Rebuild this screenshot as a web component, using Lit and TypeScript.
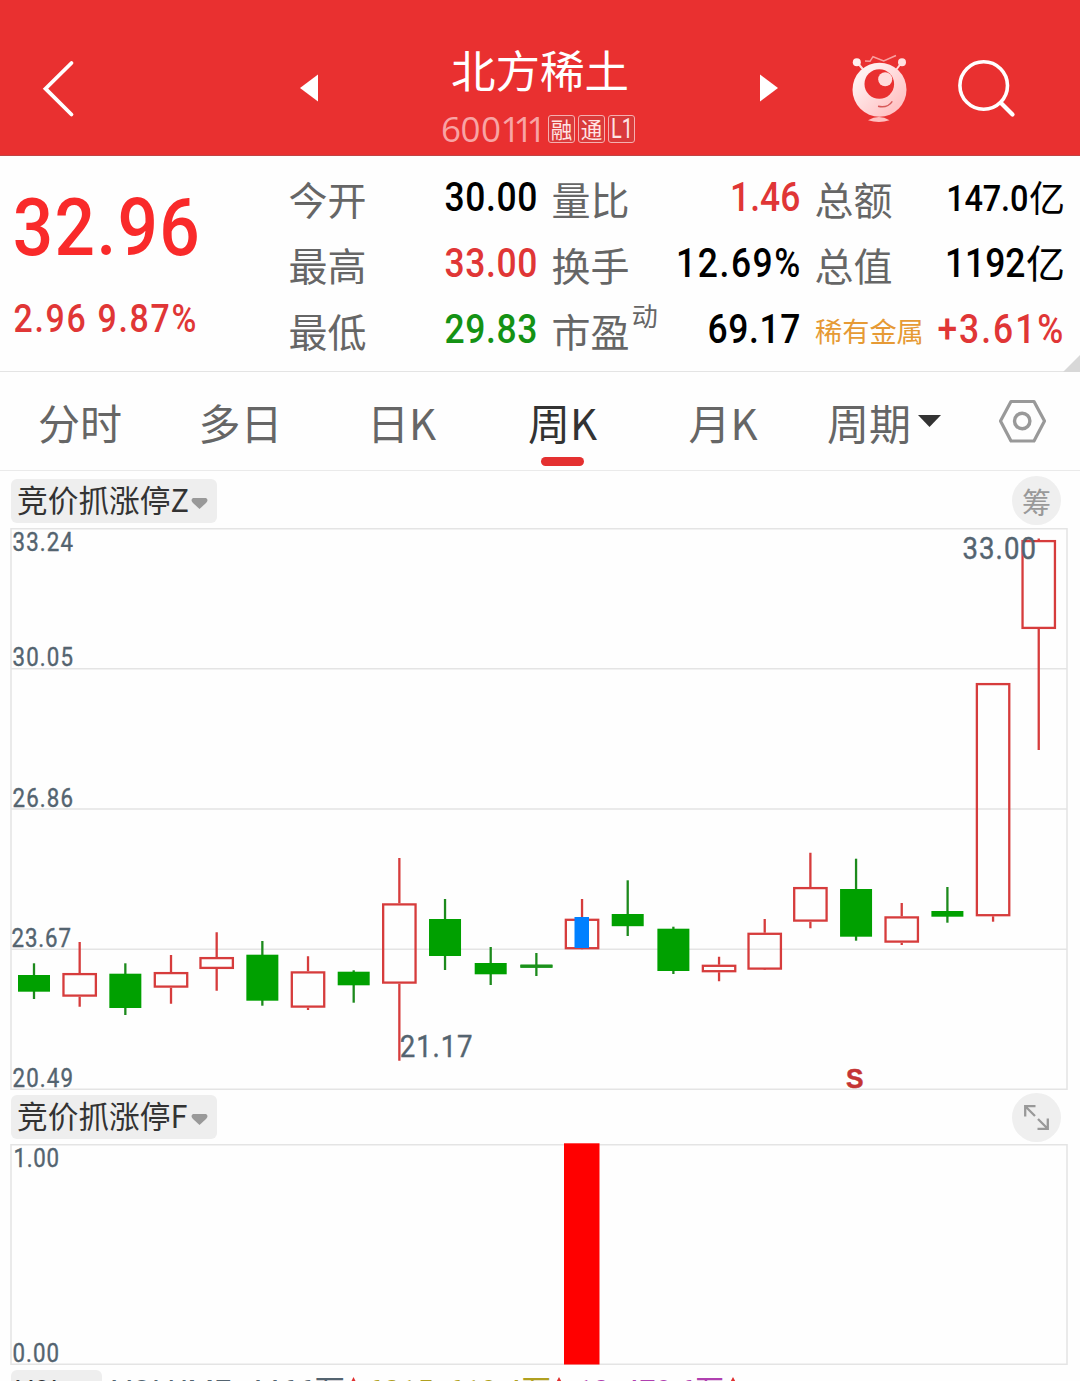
import { LitElement, html, svg, css } from "lit";
import { customElement } from "lit/decorators.js";

type Candle = [up: boolean, top: number, bottom: number, high: number, low: number];

const CANDLES: Candle[] = [
  [false, 975, 991.7, 963.3, 999],
  [true, 973, 996.7, 942, 1006.7],
  [false, 973.7, 1008, 963.3, 1015],
  [true, 972, 987.7, 955, 1003.7],
  [true, 957, 969, 932.3, 990.7],
  [false, 954.7, 1000.7, 941, 1005.7],
  [true, 971.3, 1007.7, 956.3, 1010],
  [false, 971.7, 985.3, 970.3, 1002.7],
  [true, 903.3, 983.7, 858, 1060.7],
  [false, 919, 956, 899, 970],
  [false, 963, 974.3, 947, 985],
  [false, 964.7, 967.7, 953, 976],
  [true, 918.7, 949.3, 899, 949],
  [false, 914, 926.2, 880.3, 936],
  [false, 928.7, 971, 926.7, 974],
  [true, 964.7, 972.3, 956.7, 981.3],
  [true, 932.7, 969.7, 919, 969],
  [true, 887, 921.7, 852.7, 928.3],
  [false, 889, 936.7, 858.7, 940.7],
  [true, 916.3, 942.7, 903, 945],
  [false, 911, 916.7, 887, 922.7],
  [true, 683, 916.3, 683, 921.7],
  [true, 540, 629, 538.5, 750],
];

/** Horizontal squeeze that gives the figures their condensed, openly spaced look. */
const SQUEEZE = 0.89;

/** A figure fitted to a given ink width; `lead` is the left bearing of its first glyph in em. */
const figure = (text: string, width: number, size: number, color: string, baseline: number, height: number, lead = 0.015) => html`
  <svg class="fig" width=${width} height=${height}>
    <text transform="scale(${SQUEEZE} 1)" x=${(-lead * size) / SQUEEZE} y=${baseline} font-size=${size} fill=${color}
      textLength=${(width + (lead - 0.015) * size) / SQUEEZE} lengthAdjust="spacing">${text}</text>
  </svg>`;

const label = (text: string, x: number, y: number, width: number, size: number) => svg`
  <text class="axis" transform="scale(${SQUEEZE} 1)" x=${(x - 0.02 * size) / SQUEEZE} y=${y} font-size=${size}
    textLength=${(width + 0.02 * size) / SQUEEZE} lengthAdjust="spacing">${text}</text>`;

const candle = ([up, top, bottom, high, low]: Candle, i: number) => {
  const cx = 34 + i * 45.67;
  return up
    ? svg`<path class="up" d="M${cx} ${high}V${top}M${cx} ${bottom}V${low}"/>
        <rect class="up" x=${cx - 16.2} y=${top + 1.1} width="32.4" height=${bottom - top - 2.2}/>`
    : svg`<path class="down" d="M${cx} ${high}V${low}"/>
        <rect class="fill" x=${cx - 16} y=${top} width="32" height=${bottom - top}/>`;
};

@customElement("app-root")
export class AppRoot extends LitElement {
  static styles = css`
    :host { display: block; width: 1080px; height: 1381px; overflow: hidden; background: #fefefe; font-family: "Noto Sans CJK SC", sans-serif; color: #666; }
    svg { display: block; overflow: visible; flex: none; }
    .fig text, .axis { font-family: Roboto, sans-serif; font-weight: 500; }
    .axis { fill: #546470; font-weight: 400; stroke: #546470; stroke-width: 0.4; }
    header { box-sizing: border-box; height: 156px; background: #e93030; border-bottom: 1px solid #c04444; display: grid; grid-template-columns: 299px 19px 442px 18px 74px 56px 50px 57px; }
    .mid { display: flex; flex-direction: column; align-items: center; }
    .name { margin: 43px 0 0 2px; height: 51px; line-height: 51px; font-size: 44.5px; color: #fff; }
    .sub { display: flex; align-items: center; margin-top: 21px; width: 194px; gap: 3px; }
    .code { width: 103px; }
    .badge { box-sizing: border-box; width: 27px; height: 28px; border: 1px solid #f5b0b0; border-radius: 3px; background: #d93a3a; color: #ffe4e4; font-size: 21.5px; line-height: 25px; display: flex; justify-content: center; white-space: nowrap; flex: none; }
    .quote { box-sizing: border-box; height: 216px; border-bottom: 1px solid #e4e4e4; display: grid; grid-template-columns: 275px 775px; column-gap: 14px; position: relative; }
    .price { padding: 8px 0 0 14px; }
    .grid { display: grid; grid-template-columns: repeat(3, 249px); grid-auto-rows: 66px; column-gap: 14px; padding-top: 8px; }
    .cell { display: flex; justify-content: space-between; }
    .lab { font-size: 39px; line-height: 66px; height: 66px; margin-top: 1px; margin-left: -0.4px; white-space: nowrap; display: flex; }
    .sup { font-size: 26px; line-height: 36px; margin-left: 2px; }
    .sector { font-size: 27.2px; color: #e69a35; margin-left: 0; }
    .val { display: flex; }
    .yi { color: #000; line-height: 66px; height: 66px; white-space: nowrap; }
    .yi1 { font-size: 36px; margin-top: -1px; margin-right: -1px; }
    .yi2 { font-size: 39px; margin-top: -2px; margin-right: -1px; }
    .corner { position: absolute; right: 0; bottom: -1px; }
    nav { box-sizing: border-box; height: 99px; border-bottom: 1px solid #eaeaea; display: grid; grid-template-columns: 160px 161px 161px 161px 160px 162px 115px; font-size: 42px; }
    .tab { display: flex; flex-direction: column; align-items: center; line-height: 62px; padding-top: 19px; white-space: nowrap; }
    .on { color: #333; }
    .on::after { content: ""; width: 43px; height: 9px; border-radius: 5px; background: #e43030; margin-top: 4px; }
    .more { flex-direction: row; align-items: flex-start; gap: 7px; padding-left: 24px; }
    .tri { margin-top: 2px; }
    .bar { box-sizing: border-box; display: flex; justify-content: space-between; align-items: center; padding: 0 19px 0 11px; }
    .b1 { height: 57px; padding-top: 2px; }
    .b2 { height: 54px; }
    .chip { box-sizing: border-box; width: 206px; height: 44px; border-radius: 6px; background: #eee; color: #333; display: grid; grid-template-columns: 174px 17px; align-items: center; font-size: 30.7px; line-height: 40px; padding: 0 0 5px 6px; white-space: nowrap; }
    .chip svg { margin-top: 9px; }
    .round { width: 49px; height: 49px; border-radius: 50%; background: #efefef; color: #999; display: grid; place-items: center; font-size: 29px; line-height: 40px; }
    .up { fill: none; stroke: #d63c3c; stroke-width: 2.3; }
    .down { stroke: #1c8a1c; stroke-width: 2.3; }
    .fill { fill: #00a000; }
    .line { fill: none; stroke: #e4e4e4; stroke-width: 1.5; }
    .sell { font: bold 27px "Liberation Sans", sans-serif; fill: #c43434; stroke: #c43434; stroke-width: 0.5; }
    .foot { height: 11px; margin-top: 4px; padding-left: 11px; display: flex; gap: 10px; overflow: hidden; }
    .vol { width: 91px; height: 11px; border-radius: 6px 6px 0 0; background: #eee; }
    .foot text { font-family: Roboto, "Noto Sans CJK SC", sans-serif; font-size: 29px; }
  `;

  private header() {
    return html`<header>
      <svg width="299" height="155"><path d="M71.5 63L45.5 88.7L71.5 114.5" fill="none" stroke="#fff" stroke-width="3.8" stroke-linecap="round"/></svg>
      <svg width="19" height="155"><path d="M1 88L19 74.5V101.5Z" fill="#fff"/></svg>
      <div class="mid">
        <div class="name">北方稀土</div>
        <div class="sub">
          <svg class="code" width="103" height="28"><text x="-1 18.5 39 58.5 71.5 84.5" y="26.5" font-family="Open Sans, sans-serif" font-size="35" fill="#f8a4a4">600111</text></svg>
          <span class="badge">融</span><span class="badge">通</span><span class="badge"><svg width="22" height="26"><text x="0" y="21.5" font-family="Roboto, sans-serif" font-size="27" fill="#ffe4e4" textLength="22" lengthAdjust="spacingAndGlyphs">L1</text></svg></span>
        </div>
      </div>
      <svg width="18" height="155"><path d="M0 74.5L18 88L0 101.5Z" fill="#fff"/></svg>
      <span></span>
      <svg width="56" height="155" viewBox="852 0 56 155">
        <defs><linearGradient id="g" x1="0" y1="0" x2="1" y2="1"><stop offset="0.2" stop-color="#fff0f0"/><stop offset="0.8" stop-color="#ffc4c6"/></linearGradient></defs>
        <path d="M857 62L863.5 70M902 62L896 70" stroke="#ffdada" stroke-width="2"/>
        <circle cx="856.8" cy="62.3" r="4" fill="#fff0f0"/><circle cx="902" cy="62.3" r="4" fill="#ffe0e0"/>
        <path d="M865 61L870 61.3L873 56.7L883.7 61L896 55.5" fill="none" stroke="#f9a0a0" stroke-width="1.5"/>
        <circle cx="879.5" cy="89.7" r="27" fill="url(#g)"/>
        <circle cx="879.3" cy="84" r="14.8" fill="#e93030"/>
        <circle cx="885.2" cy="79.3" r="7" fill="#ffdcdc"/>
        <path d="M878 106.3Q887.5 108.5 892.3 101.3" fill="none" stroke="#d75858" stroke-width="1.4"/>
        <path d="M868 120.3Q879 113.5 889.5 120.3Q879 123.5 868 120.3Z" fill="#ffc0c0"/>
      </svg>
      <span></span>
      <svg width="57" height="155" viewBox="958 0 57 155"><circle cx="983.7" cy="85.5" r="23.8" fill="none" stroke="#fff" stroke-width="3.6"/><path d="M1001 103L1012.5 114.5" stroke="#fff" stroke-width="4.2" stroke-linecap="round"/></svg>
    </header>`;
  }

  private quote() {
    const red = "#e03636";
    const v = (s: string, w: number, c: string, lead = 0.015) => figure(s, w, 39.8, c, 47, 66, lead);
    return html`<section class="quote">
      <div class="price">
        ${figure("32.96", 187, 80, "#f92a2a", 91.5, 110)}
        ${figure("2.96 9.87%", 183, 38, red, 58, 90)}
      </div>
      <div class="grid">
        <div class="cell"><span class="lab">今开</span>${v("30.00", 93, "#000")}</div>
        <div class="cell"><span class="lab">量比</span>${v("1.46", 69, red, 0.05)}</div>
        <div class="cell"><span class="lab">总额</span><span class="val">${figure("147.0", 81, 36.5, "#000", 47, 66, 0.05)}<span class="yi yi1">亿</span></span></div>
        <div class="cell"><span class="lab">最高</span>${v("33.00", 93, red)}</div>
        <div class="cell"><span class="lab">换手</span>${v("12.69%", 123, "#000", 0.05)}</div>
        <div class="cell"><span class="lab">总值</span><span class="val">${v("1192", 79, "#000", 0.05)}<span class="yi yi2">亿</span></span></div>
        <div class="cell"><span class="lab">最低</span>${v("29.83", 93, "#149214")}</div>
        <div class="cell"><span class="lab">市盈<span class="sup">动</span></span>${v("69.17", 93, "#000")}</div>
        <div class="cell"><span class="lab sector">稀有金属</span>${v("+3.61%", 126, red)}</div>
      </div>
      <svg class="corner" width="17" height="17"><path d="M17 0V17H0Z" fill="#d8d8d8"/></svg>
    </section>`;
  }

  private tabs() {
    return html`<nav>
      <span class="tab">分时</span><span class="tab">多日</span><span class="tab">日K</span><span class="tab on">周K</span><span class="tab">月K</span>
      <span class="tab more">周期<svg class="tri" width="23" height="62"><path d="M0 22H23L11.5 34Z" fill="#333"/></svg></span>
      <svg width="115" height="98" viewBox="965 372 115 98"><g fill="none" stroke="#999"><path d="M1011 401.5H1034L1044.5 421L1034 441H1011L1000.5 421Z" stroke-width="3.2" stroke-linejoin="round"/><circle cx="1022.2" cy="421" r="7.7" stroke-width="3.4"/></g></svg>
    </nav>`;
  }

  private chip(text: string) {
    return html`<span class="chip">${text}<svg width="17" height="11"><path d="M2 0H15Q18 2 15 5L8.5 11L2 5Q-1 2 2 0Z" fill="#999"/></svg></span>`;
  }

  render() {
    return html`${this.header()}${this.quote()}${this.tabs()}
      <div class="bar b1">${this.chip("竞价抓涨停Z")}<span class="round">筹</span></div>
      <svg width="1080" height="562" viewBox="0 528 1080 562">
        <path class="line" d="M11 528.7H1067V1089.3H11ZM11 668.7H1067M11 809H1067M11 949.3H1067"/>
        ${CANDLES.map(candle)}
        <rect x="574.5" y="917" width="14.5" height="31" fill="#0080ff"/>
        <rect x="520.5" y="964.7" width="32" height="3" fill="#1c901c"/>
        ${label("33.24", 13, 551, 60, 25)}${label("30.05", 13, 666, 60, 25)}${label("26.86", 13, 807, 60, 25)}
        ${label("23.67", 12, 947, 59, 25)}${label("20.49", 13, 1087, 60, 25)}
        ${label("21.17", 400.5, 1057, 72, 31)}${label("33.00", 963, 559, 73, 31)}
        <text class="sell" x="846" y="1088" textLength="17.5" lengthAdjust="spacingAndGlyphs">S</text>
      </svg>
      <div class="bar b2">${this.chip("竞价抓涨停F")}<span class="round"><svg width="25" height="25"><path d="M1.2 11.5V1.2H11.5M2 2L11 11M23.8 13.5V23.8H13.5M23 23L14 14" fill="none" stroke="#999" stroke-width="2.3"/></svg></span></div>
      <svg width="1080" height="222" viewBox="0 1144 1080 222">
        <path class="line" d="M11 1144.7H1067V1364.3H11Z"/>
        <rect x="564" y="1143.3" width="35.5" height="221.2" fill="#f00"/>
        ${label("1.00", 14, 1167, 45, 25)}${label("0.00", 13, 1362, 46, 25)}
      </svg>
      <div class="foot">
        <svg class="vol" width="91" height="11" viewBox="11 1370 91 11"><text x="16" y="1400.5" fill="#333" textLength="49" lengthAdjust="spacingAndGlyphs">VOL</text></svg>
        <svg width="640" height="11" viewBox="112 1370 640 11">
          <text x="112" y="1400.5" fill="#546470" textLength="233" lengthAdjust="spacingAndGlyphs">VOLUME: 4466万</text>
          <text x="367" y="1400.5" fill="#b0a020" textLength="184" lengthAdjust="spacingAndGlyphs">6015: 619.4万</text>
          <text x="577" y="1400.5" fill="#b040b0" textLength="147" lengthAdjust="spacingAndGlyphs">10: 478.6万</text>
          <path d="M347 1390L353.5 1377L360 1390ZM552 1390L559 1377L566 1390ZM726 1390L733 1377L740 1390Z" fill="#e03030"/>
        </svg>
      </div>`;
  }
}
